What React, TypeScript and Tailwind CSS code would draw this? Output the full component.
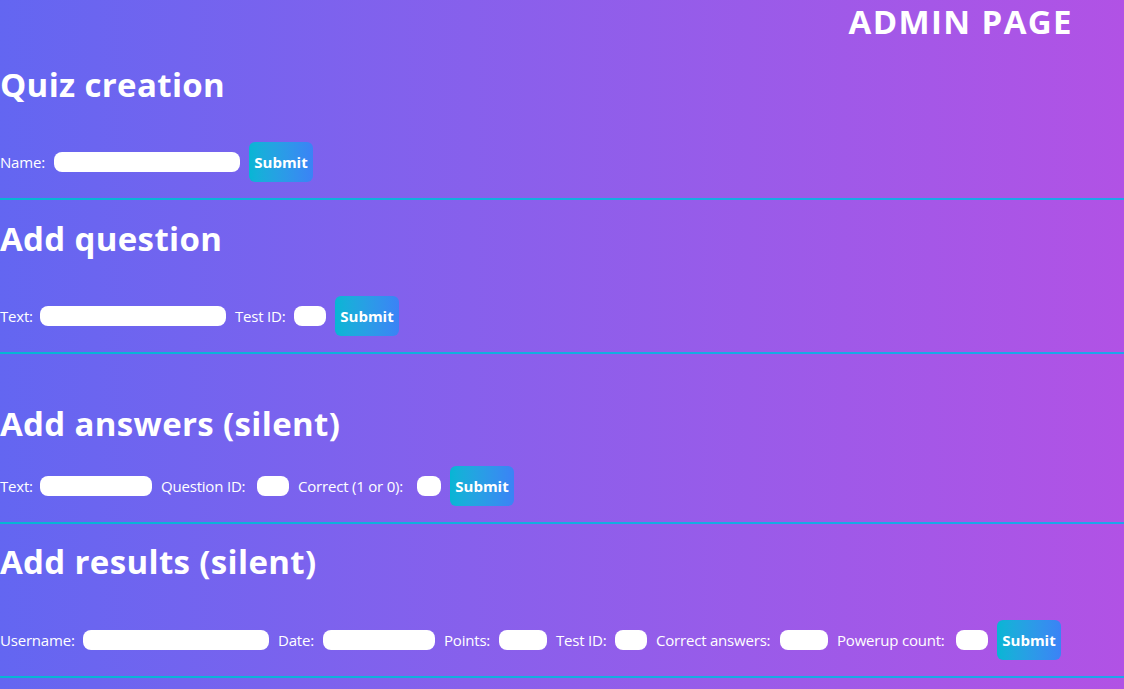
import React from "react";

const font = { fontFamily: '"Open Sans", "Noto Sans", sans-serif' };

function Label({ w, text, first }: { w: string; text: string; first?: boolean }) {
  return (
    <span className={`${w} ${first ? "" : "ml-[9px]"} shrink-0 whitespace-nowrap text-[15px] leading-5 tracking-[-0.2px] text-white`}>
      {text}
    </span>
  );
}

function Field({ w }: { w: string }) {
  return <input type="text" className={`${w} ml-2 h-5 shrink-0 rounded-lg border-0 bg-white p-0 outline-none`} />;
}

function Submit() {
  return (
    <button className="ml-[9px] flex h-10 w-16 shrink-0 items-center justify-center rounded-md bg-gradient-to-r from-[#06b6d4] to-[#3b82f6] text-[15px] font-bold text-white">
      Submit
    </button>
  );
}

function Line() {
  return <div className="h-[2px] w-full bg-gradient-to-r from-[#06b6d4] to-[#1ea5ea]" />;
}

function Heading({ text }: { text: string }) {
  return <h1 className="h-10 whitespace-nowrap text-[33px] font-bold leading-10 tracking-[0.35px] text-white">{text}</h1>;
}

export default function App() {
  return (
    <div className="min-h-screen w-full bg-gradient-to-r from-[#6366f1] to-[#b152e5]" style={font}>
      <div className="pr-[51px] text-right text-[33px] font-bold leading-[44px] tracking-[1.4px] text-white">ADMIN PAGE</div>

      <section className="pt-[21px]">
        <Heading text="Quiz creation" />
        <div className="mt-[37px] flex h-10 items-center">
          <Label w="w-[46px]" text="Name:" first />
          <Field w="w-[186px]" />
          <Submit />
        </div>
        <div className="mt-4">
          <Line />
        </div>
      </section>

      <section className="pt-[19px]">
        <Heading text="Add question" />
        <div className="mt-[37px] flex h-10 items-center">
          <Label w="w-[32px]" text="Text:" first />
          <Field w="w-[186px]" />
          <Label w="w-[51px]" text="Test ID:" />
          <Field w="w-[32px]" />
          <Submit />
        </div>
        <div className="mt-4">
          <Line />
        </div>
      </section>

      <section className="pt-[50px]">
        <Heading text="Add answers (silent)" />
        <div className="mt-[22px] flex h-10 items-center">
          <Label w="w-[32px]" text="Text:" first />
          <Field w="w-[112px]" />
          <Label w="w-[88px]" text="Question ID:" />
          <Field w="w-[32px]" />
          <Label w="w-[111px]" text="Correct (1 or 0):" />
          <Field w="w-[24px]" />
          <Submit />
        </div>
        <div className="mt-4">
          <Line />
        </div>
      </section>

      <section className="pt-[18px]">
        <Heading text="Add results (silent)" />
        <div className="mt-[38px] flex h-10 items-center">
          <Label w="w-[75px]" text="Username:" first />
          <Field w="w-[186px]" />
          <Label w="w-[37px]" text="Date:" />
          <Field w="w-[112px]" />
          <Label w="w-[47px]" text="Points:" />
          <Field w="w-[48px]" />
          <Label w="w-[51px]" text="Test ID:" />
          <Field w="w-[32px]" />
          <Label w="w-[116px]" text="Correct answers:" />
          <Field w="w-[48px]" />
          <Label w="w-[111px]" text="Powerup count:" />
          <Field w="w-[32px]" />
          <Submit />
        </div>
        <div className="mt-4">
          <Line />
        </div>
      </section>
    </div>
  );
}
